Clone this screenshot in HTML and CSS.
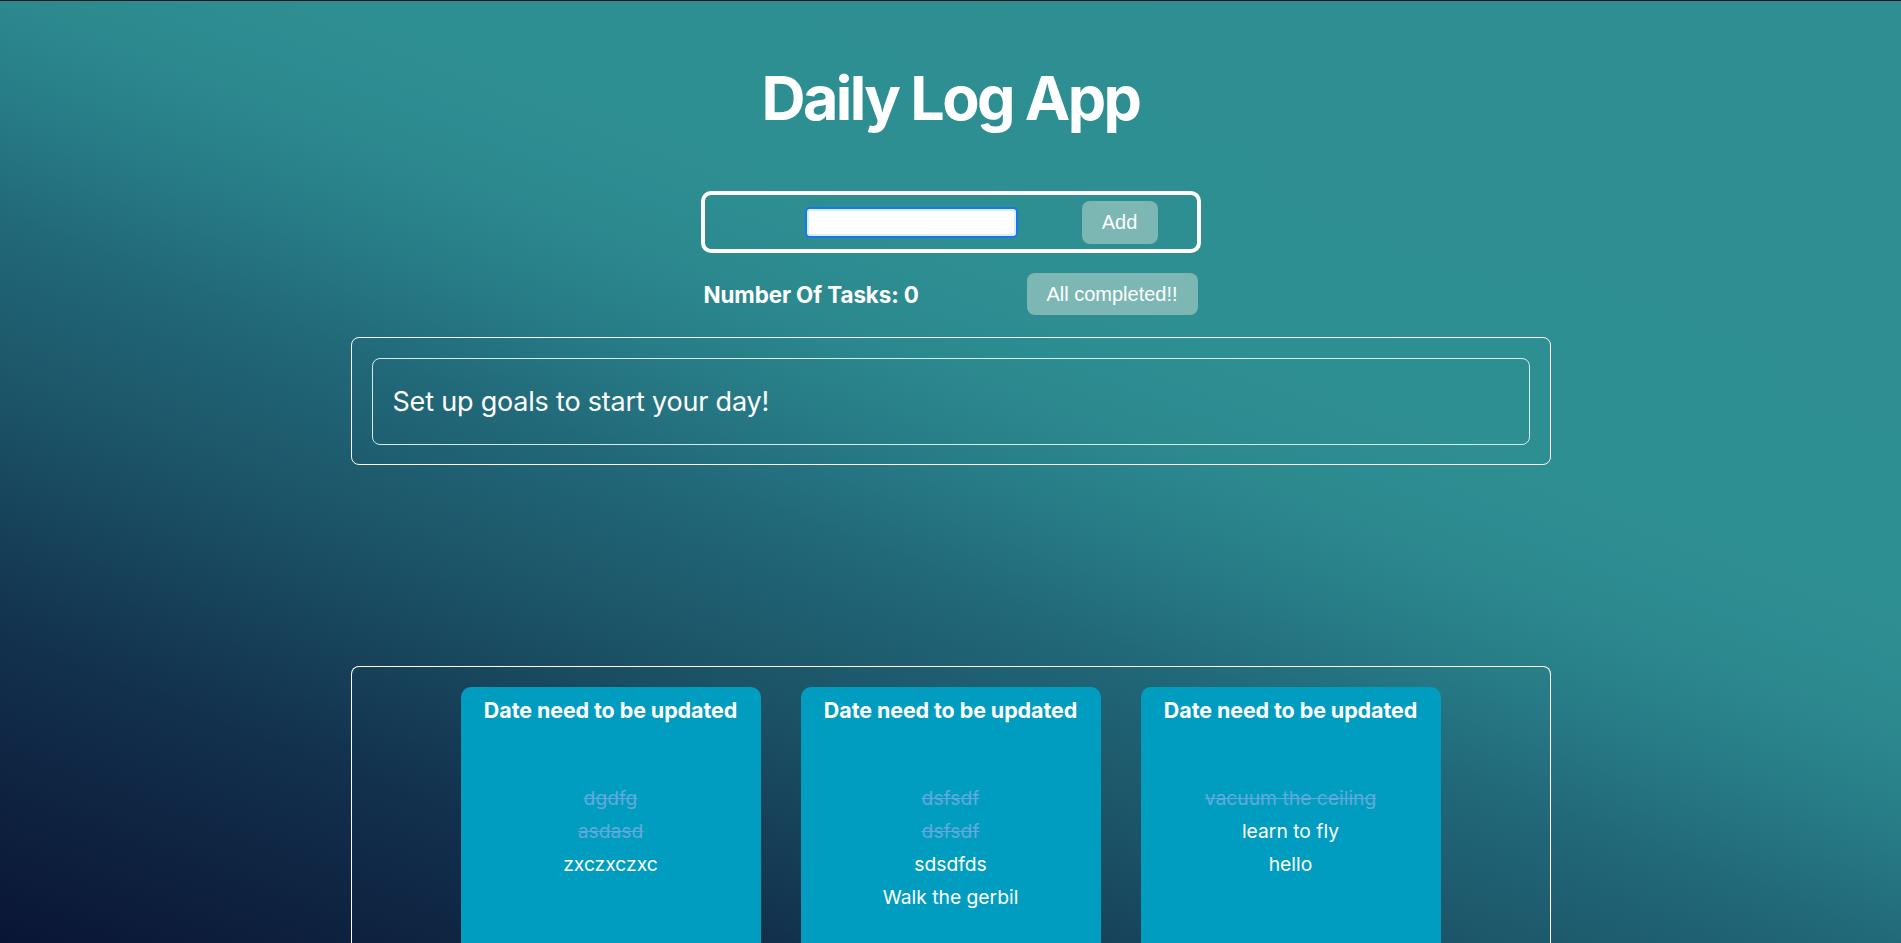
FILE: index.html
```html
<!DOCTYPE html>
<html lang="en">
<head>
<meta charset="utf-8">
<title>Daily Log App</title>
<link rel="stylesheet" href="styles.css">
</head>
<body>
<div class="app">
  <h1 class="title">Daily Log App</h1>
  <form class="add-form">
    <input class="task-input" type="text">
    <button class="btn btn-add" type="button">Add</button>
  </form>
  <div class="status-row">
    <span class="task-count">Number Of Tasks: 0</span>
    <button class="btn btn-complete" type="button">All completed!!</button>
  </div>
  <section class="panel goals-panel">
    <div class="goals-box">Set up goals to start your day!</div>
  </section>
  <section class="panel history-panel">
    <div class="day-card">
      <h3 class="day-title">Date need to be updated</h3>
      <ul class="day-list">
        <li class="done">dgdfg</li>
        <li class="done">asdasd</li>
        <li>zxczxczxc</li>
      </ul>
    </div>
    <div class="day-card">
      <h3 class="day-title">Date need to be updated</h3>
      <ul class="day-list">
        <li class="done">dsfsdf</li>
        <li class="done">dsfsdf</li>
        <li>sdsdfds</li>
        <li>Walk the gerbil</li>
      </ul>
    </div>
    <div class="day-card">
      <h3 class="day-title">Date need to be updated</h3>
      <ul class="day-list">
        <li class="done">vacuum the ceiling</li>
        <li>learn to fly</li>
        <li>hello</li>
      </ul>
    </div>
  </section>
</div>
</body>
</html>
```

FILE: styles.css
```css
* { box-sizing: border-box; }

html, body {
  margin: 0;
  padding: 0;
  height: 943px;
  overflow: hidden;
}

body {
  font-family: Inter, "Noto Sans", sans-serif;
  color: #ffffff;
  border-top: 1px solid #16191c;
  background: linear-gradient(21deg, #0a1534 0%, #12304c 18%, #1b5266 32%, #216878 43%, #277b86 50%, #2c8a8f 57%, #2e8f93 64%, #2e8e92 100%);
}

.app {
  display: flex;
  flex-direction: column;
  align-items: center;
}

.title {
  margin: 58px 0 0;
  font-size: 61px;
  line-height: 78px;
  font-weight: 700;
  letter-spacing: -2.6px;
}

.add-form {
  margin-top: 54px;
  width: 500px;
  height: 62px;
  border: 4px solid #ffffff;
  border-radius: 10px;
  display: flex;
  align-items: center;
  padding-left: 100px;
}

.task-input {
  width: 213px;
  height: 31px;
  border: 2px solid #1677f2;
  border-radius: 5px;
  background: #ffffff;
  box-shadow: inset 0 0 0 2px #dcf2f2;
  outline: none;
  margin: 0;
}

.btn {
  font-family: "Liberation Sans", Arial, sans-serif;
  font-size: 20px;
  color: #ffffff;
  background: #7db7b3;
  border: none;
  border-radius: 8px;
  cursor: pointer;
  padding: 0;
}

.btn-add {
  margin-left: 64px;
  width: 76px;
  height: 43px;
}

.status-row {
  margin-top: 20px;
  width: 494px;
  display: flex;
  justify-content: space-between;
  align-items: center;
}

.task-count {
  font-size: 22.4px;
  font-weight: 700;
  letter-spacing: -0.1px;
}

.btn-complete {
  width: 171px;
  height: 42px;
}

.panel {
  width: 1200px;
  border: 1px solid #ffffff;
  border-radius: 8px;
}

.goals-panel {
  margin-top: 22px;
  padding: 20px 20px 19px 20px;
}

.goals-box {
  height: 87px;
  border: 1px solid rgba(230, 250, 250, 0.9);
  border-radius: 8px;
  display: flex;
  align-items: center;
  padding-left: 20px;
  font-size: 27px;
  font-weight: 400;
  letter-spacing: -0.2px;
}

.history-panel {
  margin-top: 201px;
  padding-top: 20px;
  display: flex;
  justify-content: center;
  gap: 40px;
  min-height: 400px;
  border-bottom: none;
  border-radius: 8px 8px 0 0;
}

.day-card {
  width: 300px;
  min-height: 360px;
  background: #009dc0;
  border-radius: 10px;
  padding-top: 11px;
  text-align: center;
}

.day-title {
  margin: 0;
  font-size: 21.5px;
  line-height: 24px;
  font-weight: 700;
  letter-spacing: -0.1px;
}

.day-list {
  list-style: none;
  margin: 60px 0 0;
  padding: 0;
}

.day-list li {
  font-size: 19.3px;
  line-height: 33px;
}

.day-list li.done {
  color: #62a9dc;
  text-decoration: line-through;
}
```
